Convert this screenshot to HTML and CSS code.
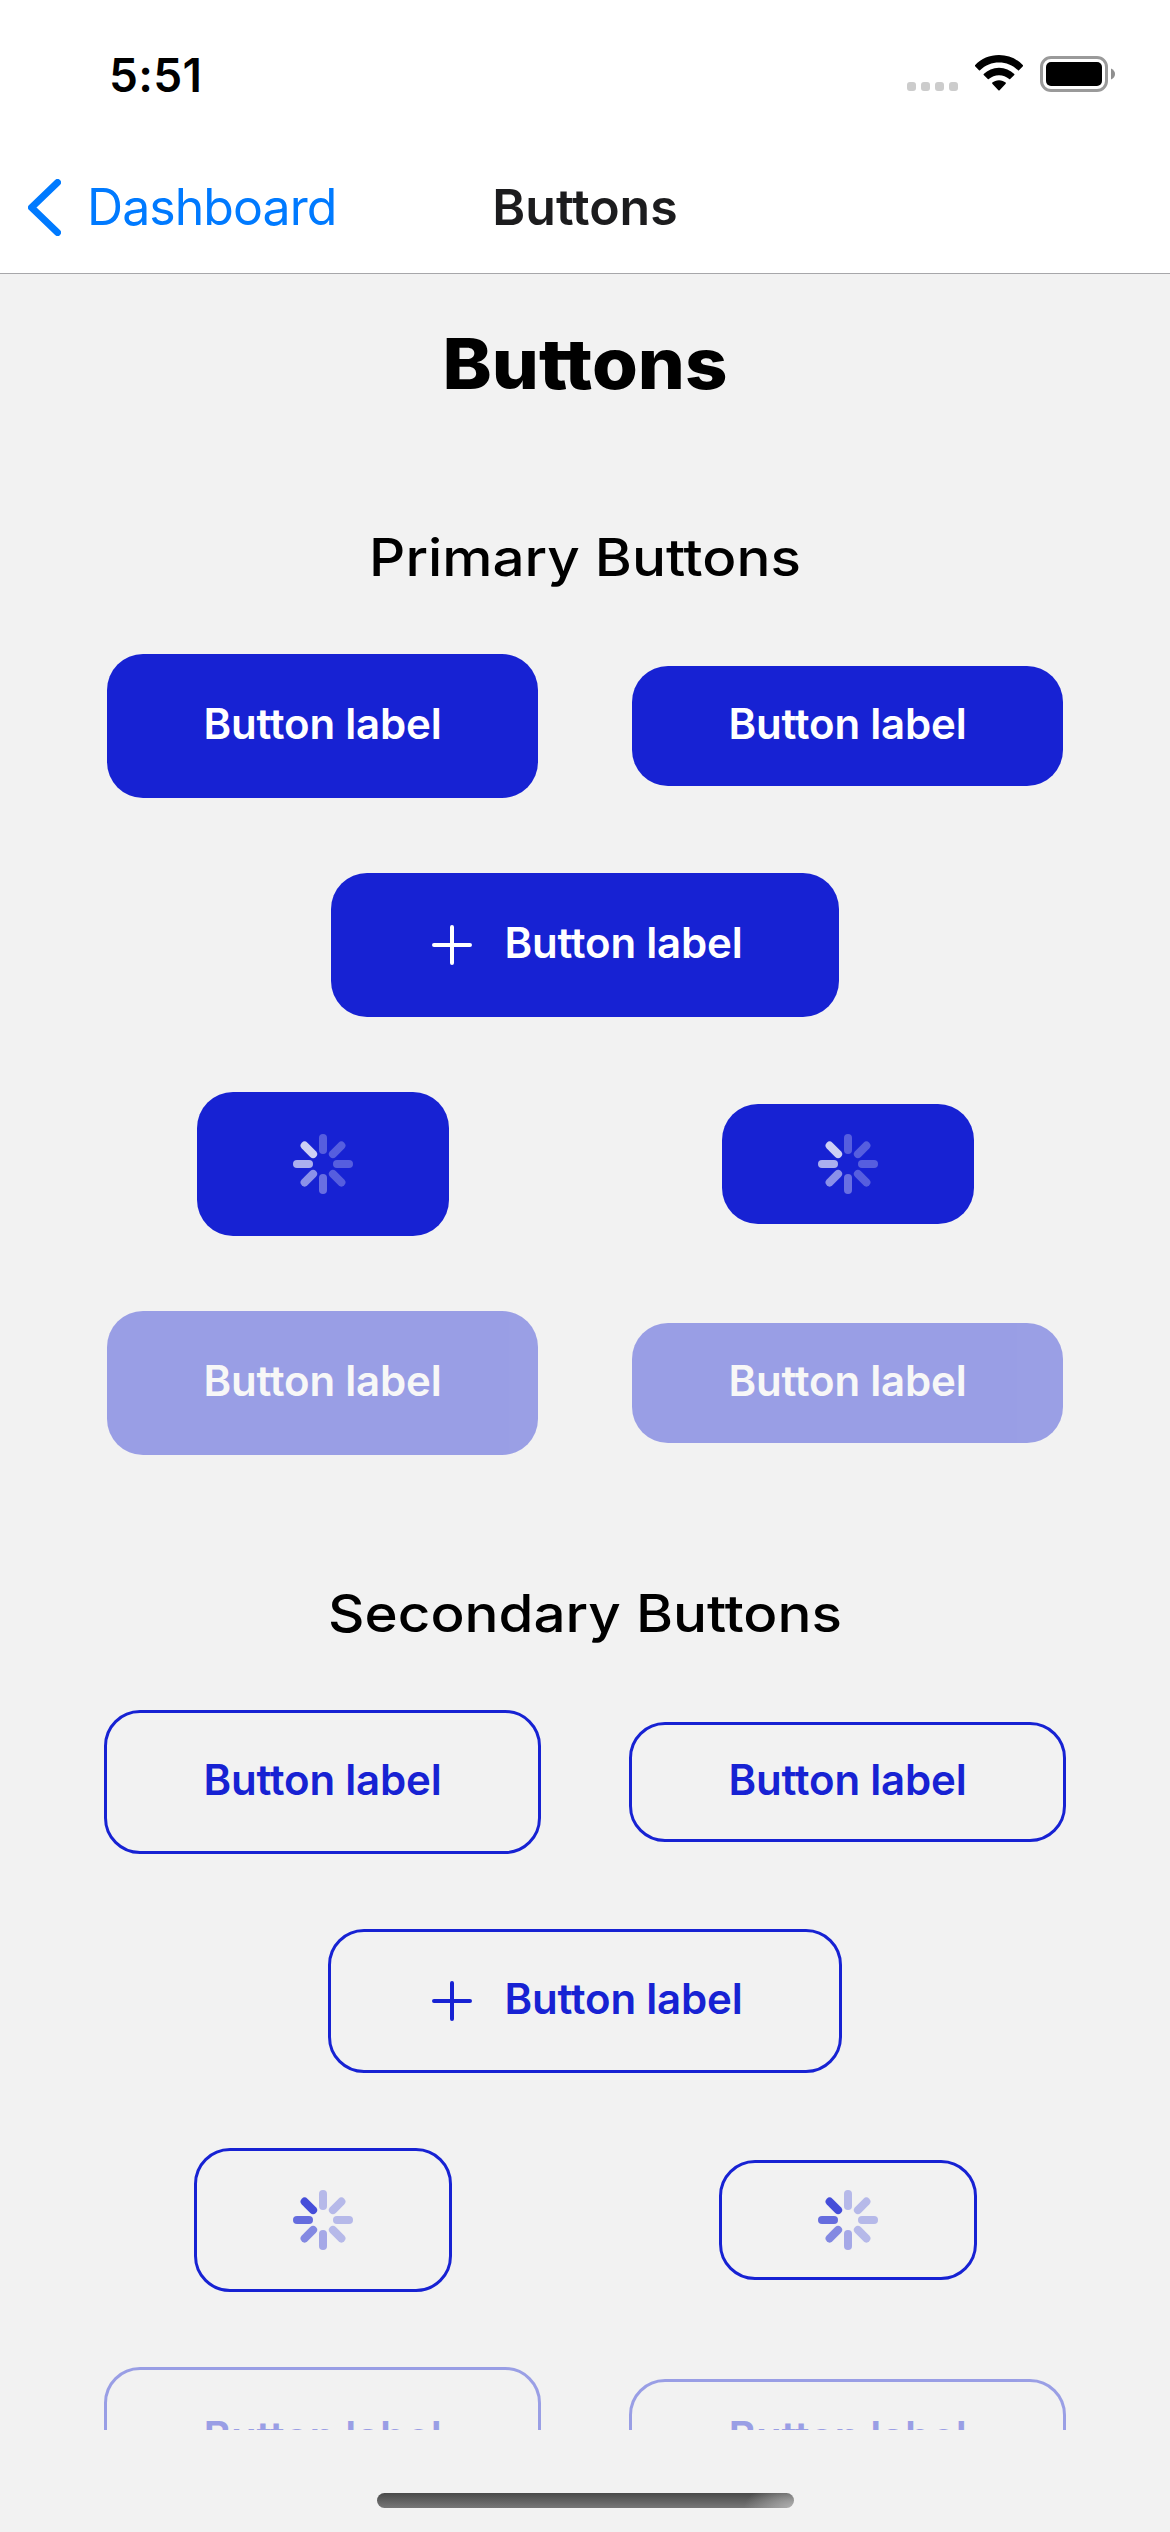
FILE: index.html
```html
<!DOCTYPE html>
<html lang="en">
<head>
<meta charset="utf-8">
<title>Buttons</title>
<link rel="stylesheet" href="styles.css">
</head>
<body>
<svg class="defs" aria-hidden="true">
  <symbol id="plus" viewBox="0 0 48 48"><path d="M24 6v36M6 24h36" fill="none" stroke="currentColor" stroke-width="4" stroke-linecap="round"/></symbol>
  <symbol id="spinner" viewBox="-30 -30 60 60">
    <g stroke="currentColor" stroke-width="8" stroke-linecap="round">
      <path d="M0-14v-12" opacity=".27"/>
      <path d="M0-14v-12" opacity=".27" transform="rotate(45)"/>
      <path d="M0-14v-12" opacity=".27" transform="rotate(90)"/>
      <path d="M0-14v-12" opacity=".27" transform="rotate(135)"/>
      <path d="M0-14v-12" opacity=".35" transform="rotate(180)"/>
      <path d="M0-14v-12" opacity=".5" transform="rotate(225)"/>
      <path d="M0-14v-12" opacity=".64" transform="rotate(270)"/>
      <path d="M0-14v-12" opacity=".79" transform="rotate(315)"/>
    </g>
  </symbol>
</svg>
<header class="header">
  <div class="status">
    <span class="time">5:51</span>
    <div class="indicators">
      <div class="signal"><i></i><i></i><i></i><i></i></div>
      <svg class="wifi" width="48" height="36" viewBox="0 0 48 36">
        <path d="M24 0C33.500 0 41.500 3.600 48 10.200Q48.300 10.700 47.900 11.200L44 15.200Q43.500 15.600 43 15.200C37.500 10.100 31.200 7.500 24 7.500S10.500 10.100 5 15.200Q4.500 15.600 4 15.200L.1 11.200Q-.3 10.700 0 10.200C6.500 3.600 14.500 0 24 0Z"/>
        <path d="M24 12.700C30 12.700 35.200 15 39.300 19Q39.700 19.500 39.300 20L35.200 24Q34.700 24.500 34.200 24C31.300 21.500 28 20.200 24 20.200S16.700 21.500 13.800 24Q13.300 24.500 12.800 24L8.700 20Q8.300 19.500 8.700 19C12.800 15 18 12.700 24 12.700Z"/>
        <path d="M24 25.200C26.700 25.200 29 26.100 30.700 27.600Q31.100 28.200 30.700 28.700L24.600 35.200Q24 35.900 23.400 35.200L17.300 28.700Q16.900 28.200 17.300 27.600C19 26.100 21.300 25.200 24 25.200Z"/>
      </svg>
      <svg class="battery" width="75" height="36" viewBox="0 0 75 36">
        <rect x="1.500" y="1.500" width="65" height="33" rx="9.500" fill="none" stroke="#9a9a9a" stroke-width="3"/>
        <rect x="6" y="6" width="56" height="24" rx="5"/>
        <path d="M71 12.500Q75 14.500 75 18T71 23.500Z" fill="#8f8f8f"/>
      </svg>
    </div>
  </div>
  <nav class="nav">
    <a class="back">
      <svg width="33" height="57" viewBox="0 0 33 57"><path d="M29.500 3.500L3.500 28.500L29.500 53.500" fill="none" stroke="currentColor" stroke-width="7" stroke-linecap="round" stroke-linejoin="round"/></svg>
      <span>Dashboard</span>
    </a>
    <span class="nav-title">Buttons</span>
  </nav>
</header>
<main class="content">
  <h1 class="title">Buttons</h1>
  <section class="section">
    <h2 class="heading">Primary Buttons</h2>
    <div class="row"><button class="btn">Button label</button><button class="btn small">Button label</button></div>
    <div class="row single"><button class="btn"><svg class="plus"><use href="#plus"/></svg>Button label</button></div>
    <div class="row"><button class="btn loading"><svg class="spinner"><use href="#spinner"/></svg></button><button class="btn loading small"><svg class="spinner"><use href="#spinner"/></svg></button></div>
    <div class="row"><button class="btn" disabled>Button label</button><button class="btn small" disabled>Button label</button></div>
  </section>
  <section class="section">
    <h2 class="heading">Secondary Buttons</h2>
    <div class="row"><button class="btn outline">Button label</button><button class="btn outline small">Button label</button></div>
    <div class="row single"><button class="btn outline"><svg class="plus"><use href="#plus"/></svg>Button label</button></div>
    <div class="row"><button class="btn outline loading"><svg class="spinner"><use href="#spinner"/></svg></button><button class="btn outline loading small"><svg class="spinner"><use href="#spinner"/></svg></button></div>
    <div class="row"><button class="btn outline" disabled>Button label</button><button class="btn outline small" disabled>Button label</button></div>
  </section>
</main>
<footer class="footer"><div class="home-bar"></div></footer>
</body>
</html>
```
FILE: styles.css
```css
* { box-sizing: border-box; }
body {
  margin: 0;
  width: 1170px;
  height: 2532px;
  overflow: hidden;
  display: flex;
  flex-direction: column;
  background: #f2f2f2;
  color: #000;
  font-family: Inter, "Liberation Sans", sans-serif;
}
.defs { display: none; }
.header {
  flex: none;
  height: 274px;
  background: #fff;
  border-bottom: 1px solid #a7a7aa;
}
.status {
  height: 141px;
  padding: 0 55px 0 109px;
  display: flex;
  justify-content: space-between;
}
.time {
  padding-top: 45px;
  font-size: 46px;
  line-height: 60px;
  font-weight: 600;
  letter-spacing: 0.3px;
}
.indicators {
  display: flex;
  align-items: flex-start;
  padding-top: 55px;
}
.signal { display: flex; gap: 5px; margin: 27px 17px 0 0; }
.signal i { width: 9px; height: 9px; border-radius: 3px; background: #ccc; }
.battery { margin: 1px 0 0 17px; }
.nav {
  height: 132px;
  display: grid;
  grid-template-columns: 1fr auto 1fr;
  align-items: center;
  padding: 0 28px;
  font-size: 50px;
  line-height: 60px;
}
.back {
  display: flex;
  align-items: center;
  gap: 26px;
  color: #007aff;
  letter-spacing: -0.95px;
}
.nav-title { font-weight: 600; color: #1c1c1e; }
.content {
  flex: none;
  height: 2156px;
  overflow: hidden;
  padding: 0 60px;
}
.title {
  margin: 0;
  padding-top: 36px;
  height: 144px;
  font-size: 70px;
  line-height: 108px;
  font-weight: 800;
  text-align: center;
  transform: scaleX(1.06);
}
.section { height: 1056px; padding-top: 99px; }
.heading {
  margin: 0 0 56px;
  font-size: 52px;
  line-height: 81px;
  font-weight: 500;
  text-align: center;
  transform: scaleX(1.087);
}
.row {
  display: grid;
  grid-template-columns: 1fr 1fr;
  place-items: center;
  height: 144px;
  margin-bottom: 75px;
}
.row.single { grid-template-columns: 1fr; }
.btn {
  display: flex;
  align-items: center;
  height: 144px;
  margin: 0;
  padding: 0 97px 4px;
  border: 0;
  border-radius: 36px;
  background: #1722d3;
  color: #fff;
  font: 600 42px/60px Inter, "Liberation Sans", sans-serif;
  letter-spacing: -0.2px;
  white-space: nowrap;
}
.btn.small { height: 120px; }
.btn.loading { padding: 0 96px 4px; }
.btn.outline {
  border: 3px solid #1722d3;
  background: transparent;
  color: #1722d3;
}
.btn:disabled { opacity: .4; }
.plus { width: 48px; height: 48px; margin: 4px 29px 0 0; }
.spinner { width: 60px; height: 60px; margin-top: 4px; }
.footer {
  flex: 1;
  display: flex;
  justify-content: center;
  padding-top: 63px;
}
.home-bar {
  width: 417px;
  height: 15px;
  border-radius: 8px;
  background:
    radial-gradient(ellipse 50px 26px at 100% 100%, #b0b0b0, rgba(176, 176, 176, 0)),
    linear-gradient(#4a4a4a, #777);
}
```
